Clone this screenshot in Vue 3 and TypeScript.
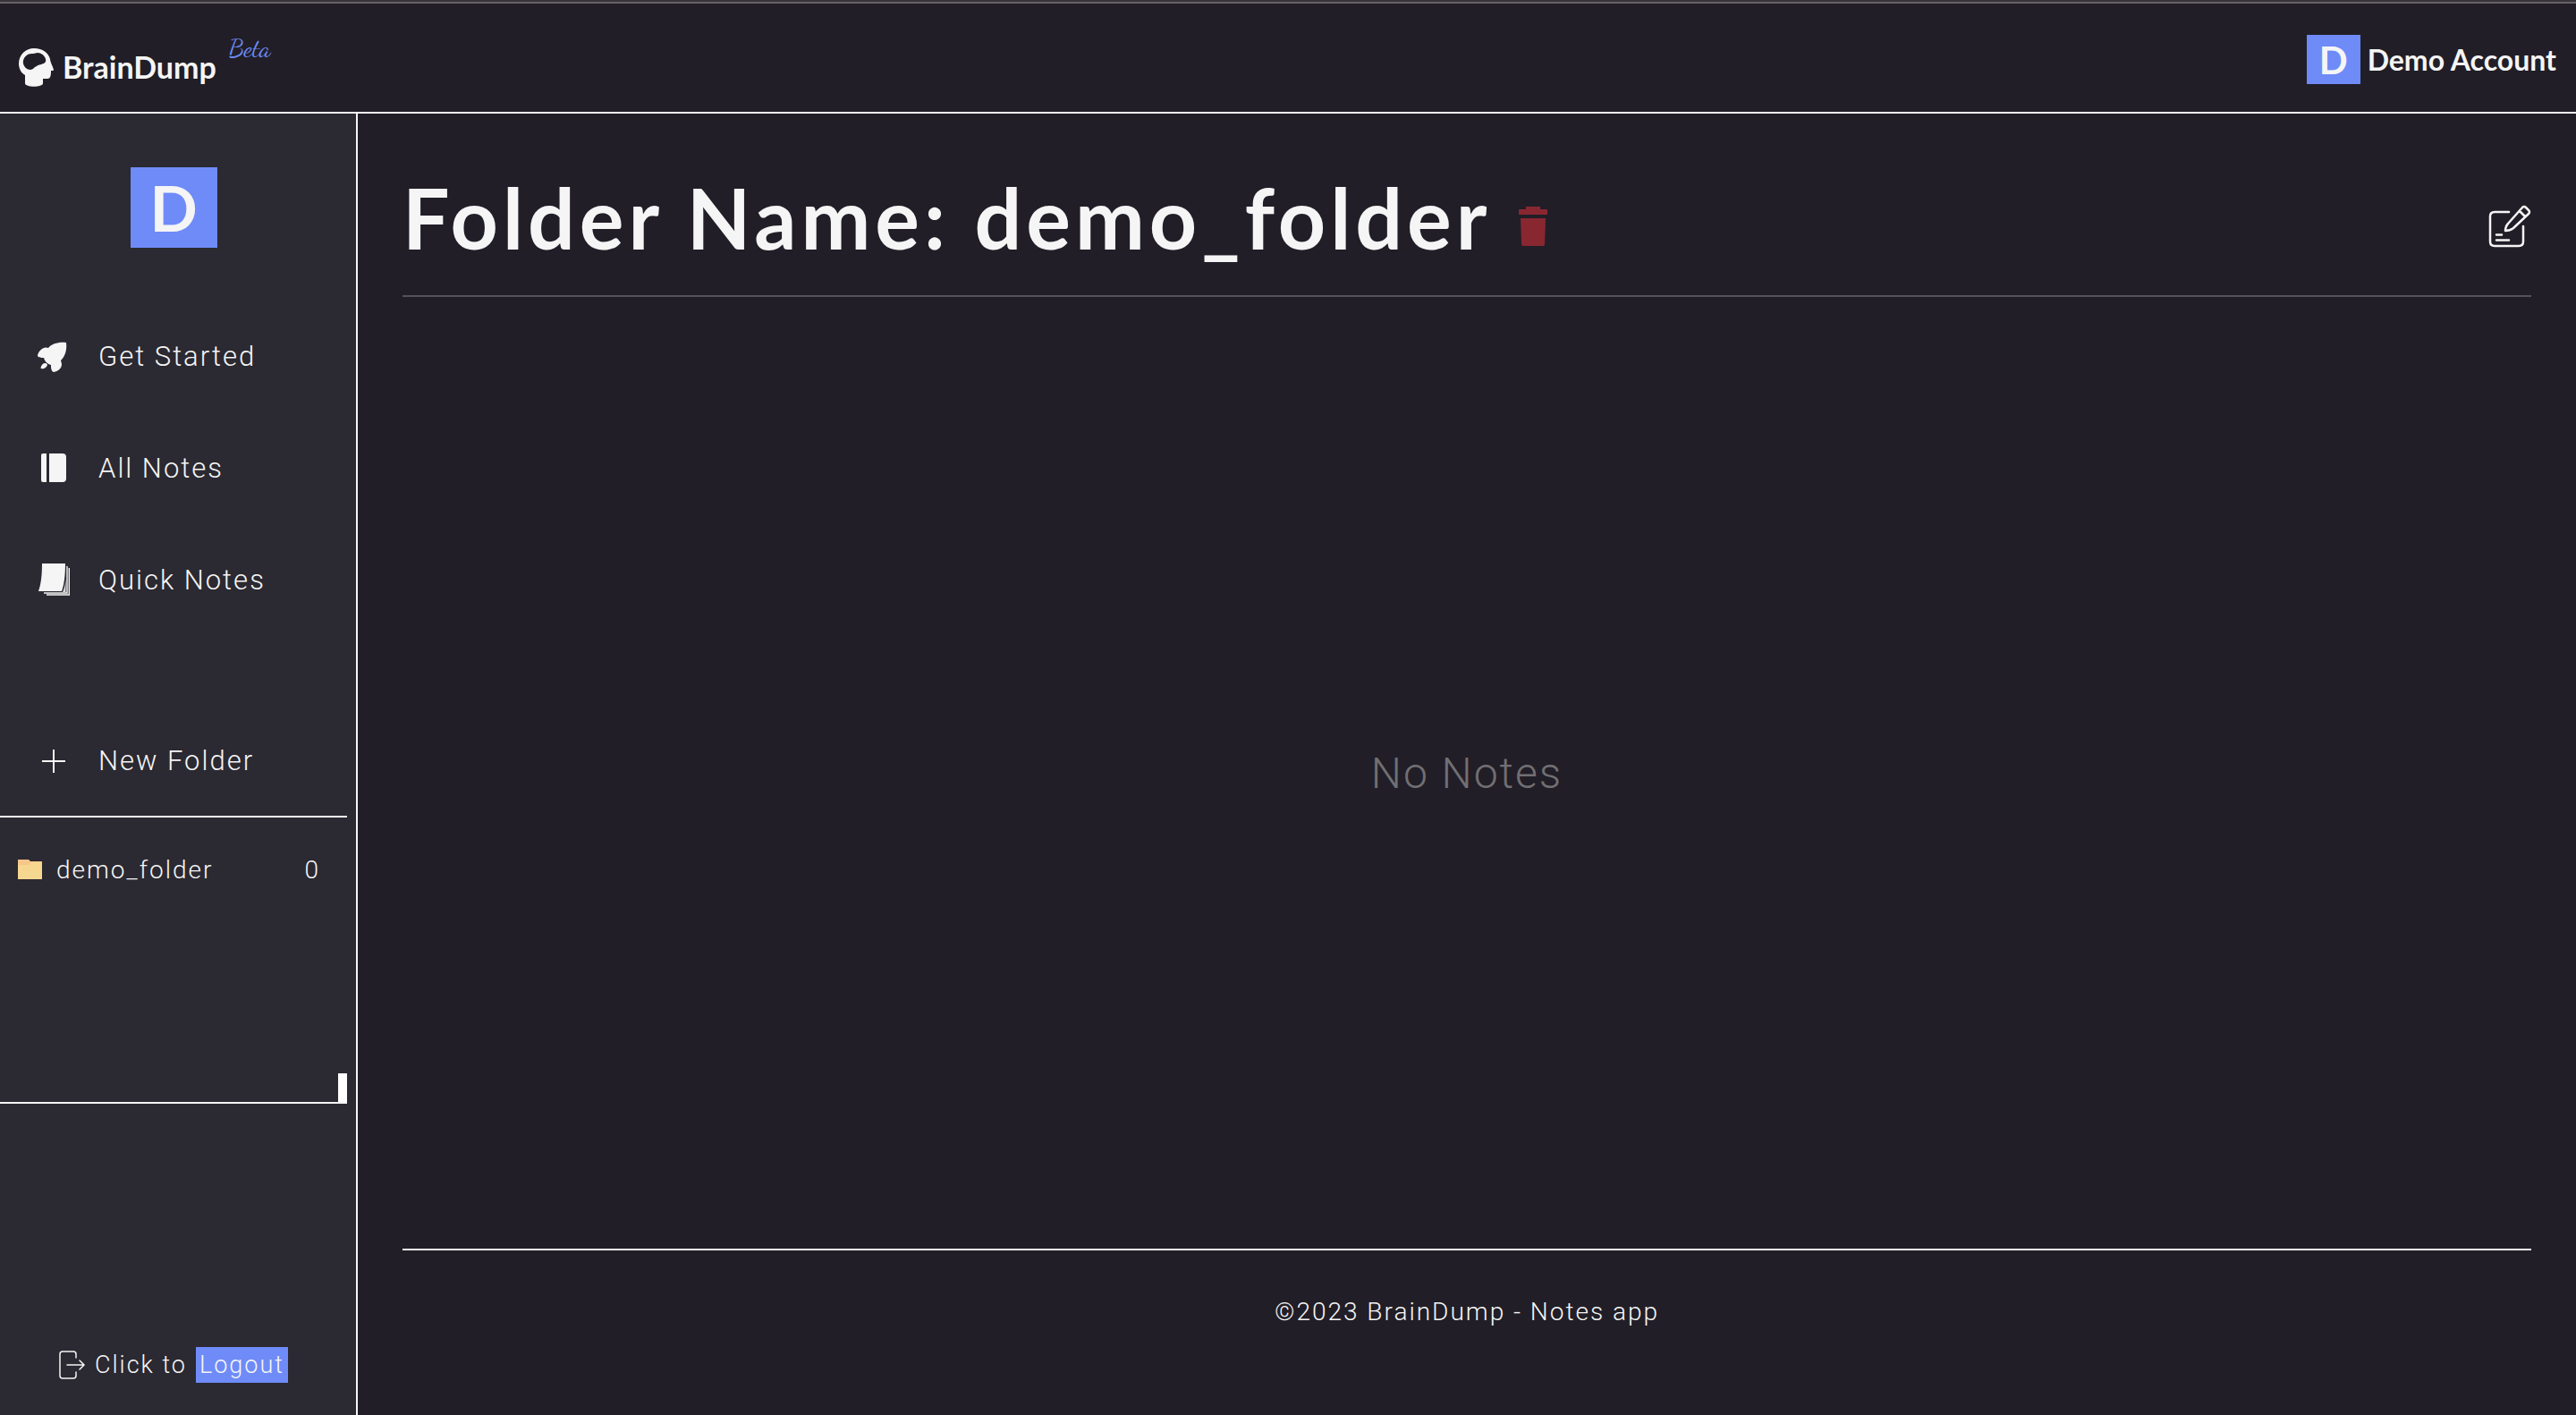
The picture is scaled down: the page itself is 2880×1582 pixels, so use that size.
<script setup lang="ts">
import { ref } from 'vue'

interface NavItem {
  label: string
  icon: 'rocket' | 'journal' | 'stack'
}

interface Folder {
  name: string
  count: number
}

const userName = 'Demo Account'
const initial = userName.charAt(0)

const navItems: NavItem[] = [
  { label: 'Get Started', icon: 'rocket' },
  { label: 'All Notes', icon: 'journal' },
  { label: 'Quick Notes', icon: 'stack' },
]

const folders = ref<Folder[]>([{ name: 'demo_folder', count: 0 }])
const activeFolder = ref<Folder>(folders.value[0])
</script>

<template>
  <div class="app">
    <header class="topbar">
      <a href="#" class="brand">
        <svg class="brand-icon" viewBox="0 0 40 44" aria-hidden="true">
          <path
            fill="currentColor"
            fill-rule="evenodd"
            d="M18 1C28 1 34 6 36 13c0 3 3 8 4 12 0 1-1 1-3 1 0 4 0 9-4 9h-5v5c0 5-20 5-20 0v-9C3 28 1 23 1 18 1 8 9 1 18 1ZM17 7C10 6 5 12 6 18c1 4 4 7 8 7 3 0 4-3 7-4 2-2 3-1 5-2 3-1 6-2 5-6-1-4-5-7-9-7-2 0-3 1-5 1Z"
          />
        </svg>
        <span class="brand-name">BrainDump</span>
        <span class="brand-tag">Beta</span>
      </a>
      <a href="#" class="account">
        <span class="avatar avatar-small">{{ initial }}</span>
        <span>{{ userName }}</span>
      </a>
    </header>

    <div class="body">
      <aside class="sidebar">
        <div class="avatar avatar-large">{{ initial }}</div>

        <nav class="nav">
          <a v-for="item in navItems" :key="item.label" href="#" class="nav-item">
            <svg v-if="item.icon === 'rocket'" class="nav-icon" viewBox="0 0 40 40" aria-hidden="true">
              <path
                fill="currentColor"
                d="M36 4C28 3 20 5 16 10c-5-2-10 2-12 8 0 3 4 3 7 3 1 4 4 7 8 8 0 3 0 7 3 8 5-1 9-4 9-9l-1-4c5-5 7-12 6-20ZM15 29c-1-3-5-2-6 0-1 1-2 4-1 4 3 1 6-1 7-4Z"
              />
            </svg>
            <svg v-else-if="item.icon === 'journal'" class="nav-icon" viewBox="0 0 40 40" aria-hidden="true">
              <path fill="currentColor" d="M10 3h4v32h-4a2 2 0 0 1-2-2V5a2 2 0 0 1 2-2ZM17 3h15a4 4 0 0 1 4 4v24a4 4 0 0 1-4 4H17Z" />
            </svg>
            <svg v-else class="nav-icon" viewBox="0 0 40 40" aria-hidden="true">
              <path fill="currentColor" d="M9 1h26c0 12-1 23-4 31H5C8 24 9 13 9 1Z" />
              <path fill="none" stroke="currentColor" stroke-width="1.4" d="M37 4v30H11M39.300 6v30H14" />
              <path fill="#d9d9dc" d="M35.500 18v15H32c2-4 3-9 3.500-15Z" />
            </svg>
            <span>{{ item.label }}</span>
          </a>
        </nav>

        <button type="button" class="nav-item new-folder">
          <svg class="nav-icon" viewBox="0 0 40 40" aria-hidden="true">
            <path fill="none" stroke="currentColor" stroke-width="2" d="M22 7v26M9 20h26" />
          </svg>
          <span>New Folder</span>
        </button>

        <div class="folders">
          <ul class="folder-list">
            <li v-for="folder in folders" :key="folder.name">
              <a href="#" class="folder">
                <svg class="folder-icon" viewBox="0 0 27 24" aria-hidden="true">
                  <path fill="#f6c68a" d="M0 1h12l2 2h13v20H0Z" />
                  <path fill="#f5d78f" d="M0 7h12l3-3h12v19H0Z" />
                </svg>
                <span>{{ folder.name }}</span>
                <span class="folder-count">{{ folder.count }}</span>
              </a>
            </li>
          </ul>
          <span class="scroll-thumb"></span>
        </div>

        <div class="logout">
          <svg class="logout-icon" viewBox="0 0 30 32" aria-hidden="true">
            <g fill="none" stroke="currentColor" stroke-width="1.500" stroke-linecap="round">
              <path d="M19 8V4q0-3-3-3H4Q1 1 1 4v24q0 3 3 3h12q3 0 3-3v-4M9 16h19M23 11l5 5-5 5" />
            </g>
          </svg>
          <span>Click to</span>
          <button type="button" class="logout-button">Logout</button>
        </div>
      </aside>

      <main class="main">
        <div class="title-row">
          <h1 class="title">Folder Name: {{ activeFolder.name }}</h1>
          <button type="button" class="icon-button" aria-label="Delete folder">
            <svg class="trash-icon" viewBox="0 0 34 46" aria-hidden="true">
              <path fill="#892731" d="M9 1h16v3h7q1 0 1 1v5H1V5q0-1 1-1h7ZM3 14h28l-1 29q0 2-2 2H6q-2 0-2-2Z" />
            </svg>
          </button>
          <button type="button" class="icon-button new-note" aria-label="New note">
            <svg class="compose-icon" viewBox="0 0 48 48" aria-hidden="true">
              <g fill="none" stroke="currentColor" stroke-width="2.500" stroke-linecap="round" stroke-linejoin="round">
                <path d="M23 8H7q-5 0-5 5v28q0 5 5 5h27q5 0 5-5V24" />
                <path d="M19 29q0-5 3-8L38 3q2-2 4 0l3 3q2 2 0 4L28 26q-4 3-9 3ZM35 7l6 6" />
                <path d="M9 33.500h6M9 39.500h14" />
              </g>
            </svg>
          </button>
        </div>

        <section class="notes">
          <p class="empty">No Notes</p>
        </section>

        <footer class="footer">©2023 BrainDump - Notes app</footer>
      </main>
    </div>
  </div>
</template>

<style>
body {
  margin: 0;
  background: #211e27;
}
</style>

<style scoped>
.app {
  display: flex;
  flex-direction: column;
  min-height: 100vh;
  box-sizing: border-box;
  border-top: 2px solid #363439;
  background: #211e27;
  color: #f5f5f5;
  font-family: Roboto, sans-serif;
  font-weight: 300;
  font-size: 28px;
  letter-spacing: 2px;
}

a {
  color: inherit;
  text-decoration: none;
}

button {
  padding: 0;
  border: 0;
  background: none;
  color: inherit;
  font: inherit;
  letter-spacing: inherit;
  cursor: pointer;
}

svg {
  display: block;
  flex: none;
}

.topbar {
  display: flex;
  justify-content: space-between;
  box-sizing: border-box;
  height: 125px;
  padding: 0 22px 0 20px;
  border-top: 2px solid #656067;
  border-bottom: 2px solid #f5f5f5;
  font-family: Lato, sans-serif;
  font-weight: 700;
  letter-spacing: 0;
}

.brand {
  display: flex;
  align-items: center;
  padding-top: 20px;
}

.brand-icon {
  width: 40px;
  height: 44px;
}

.brand-name {
  margin-left: 10px;
  font-size: 34px;
}

.brand-tag {
  align-self: flex-start;
  margin-left: 14px;
  color: #6e8bf8;
  font-family: 'Dancing Script', cursive;
  font-weight: 400;
  font-size: 28px;
  line-height: 60px;
}

.account {
  display: flex;
  align-items: center;
  gap: 8px;
  padding-top: 4px;
  font-size: 32px;
}

.avatar {
  display: flex;
  align-items: center;
  justify-content: center;
  background: #6e8bf8;
  font-family: Lato, sans-serif;
  font-weight: 700;
  letter-spacing: 0;
}

.avatar-small {
  width: 60px;
  height: 55px;
  font-size: 42px;
}

.avatar-large {
  align-self: center;
  width: 97px;
  height: 90px;
  font-size: 70px;
}

.body {
  display: flex;
  flex: 1;
}

.sidebar {
  display: flex;
  flex-direction: column;
  flex: none;
  box-sizing: border-box;
  width: 400px;
  padding: 60px 10px 36px 0;
  border-right: 2px solid #f5f5f5;
  background: #2b2931;
}

.nav {
  margin-top: 59px;
}

.nav-item {
  display: flex;
  align-items: center;
  gap: 32px;
  box-sizing: border-box;
  width: 100%;
  height: 125px;
  padding-left: 38px;
  font-size: 31px;
}

.nav-icon {
  width: 40px;
  height: 40px;
}

.new-folder {
  margin-top: 78px;
  border-bottom: 2px solid #f5f5f5;
}

.folders {
  position: relative;
  box-sizing: border-box;
  height: 320px;
  border-bottom: 2px solid #f5f5f5;
}

.folder-list {
  margin: 0;
  padding: 0;
  list-style: none;
}

.folder {
  display: flex;
  align-items: center;
  height: 116px;
  padding: 0 30px 0 20px;
}

.folder-icon {
  width: 27px;
  height: 24px;
  margin-right: 16px;
}

.folder-count {
  margin-left: auto;
}

.scroll-thumb {
  position: absolute;
  right: 0;
  bottom: 0;
  width: 10px;
  height: 32px;
  background: #ffffff;
}

.logout {
  display: flex;
  align-items: center;
  justify-content: center;
  gap: 10px;
  margin-top: auto;
  font-size: 27px;
}

.logout-icon {
  width: 30px;
  height: 32px;
}

.logout-button {
  height: 40px;
  padding: 0 4px;
  background: #6e8bf8;
}

.main {
  display: flex;
  flex-direction: column;
  flex: 1;
  min-width: 0;
  padding: 0 50px;
}

.title-row {
  display: flex;
  align-items: center;
  box-sizing: border-box;
  height: 205px;
  padding-top: 28px;
  border-bottom: 2px solid #555259;
}

.title {
  margin: 0 30px 0 0;
  font-family: Lato, sans-serif;
  font-weight: 700;
  font-size: 93px;
  letter-spacing: 5px;
}

.icon-button {
  margin-top: 20px;
}

.trash-icon {
  width: 34px;
  height: 46px;
}

.new-note {
  margin-left: auto;
}

.compose-icon {
  width: 48px;
  height: 48px;
}

.notes {
  display: flex;
  align-items: center;
  justify-content: center;
  flex: 1;
}

.empty {
  margin: 0;
  color: #716f73;
  font-size: 48px;
}

.footer {
  box-sizing: border-box;
  height: 186px;
  padding-top: 52px;
  border-top: 2px solid #f5f5f5;
  text-align: center;
}
</style>
